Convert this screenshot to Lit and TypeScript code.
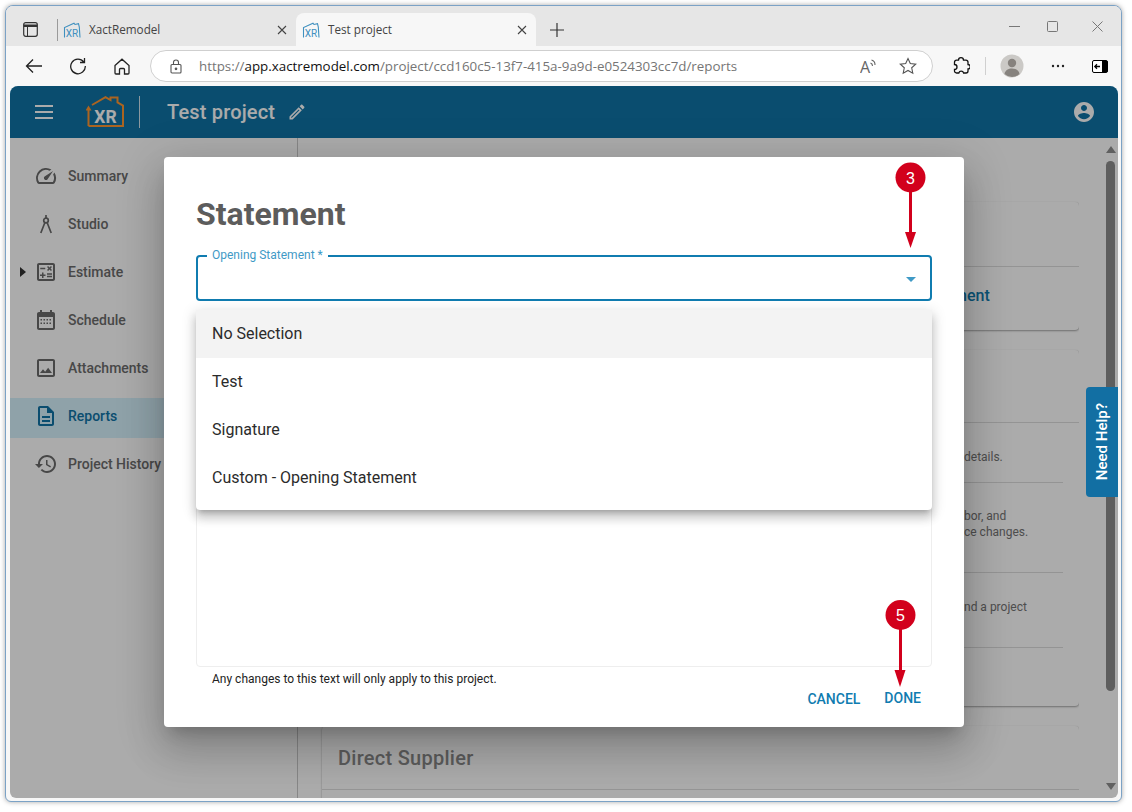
import { LitElement, html, css, svg } from "lit";
import { customElement } from "lit/decorators.js";

const P: Record<string, string> = {
  speed: "M20.38 8.57l-1.23 1.85a8 8 0 0 1-.22 7.58H5.07A8 8 0 0 1 15.58 6.85l1.85-1.23A10 10 0 0 0 3.35 19a2 2 0 0 0 1.72 1h13.85a2 2 0 0 0 1.74-1 10 10 0 0 0-.27-10.44zm-9.79 6.84a2 2 0 0 0 2.83 0l5.66-8.49-8.49 5.66a2 2 0 0 0 0 2.83z",
  calc: "M19 3H5c-1.1 0-2 .9-2 2v14c0 1.1.9 2 2 2h14c1.1 0 2-.9 2-2V5c0-1.1-.9-2-2-2zm0 16H5V5h14v14zM6.25 7.72h5v1.5h-5zM13 15.75h5v1.5h-5zM13 13.25h5v1.5h-5zM8 18h1.5v-2h2v-1.5h-2v-2H8v2H6V16h2zM14.09 10.95l1.41-1.41 1.41 1.41 1.06-1.06-1.41-1.42 1.41-1.41L16.91 6 15.5 7.41 14.09 6l-1.06 1.06 1.41 1.41-1.41 1.42z",
  cal: "M8 11H6.5v1.5H8zm3 0H9.5v1.5H11zm3 0h-1.5v1.5H14zm3 0h-1.5v1.5H17zM8 14.5H6.500v1.500H8zm3 0H9.500v1.500H11zm3 0h-1.500v1.500H14zm3 0h-1.500v1.500H17zM19 4h-1V2h-2v2H8V2H6v2H5c-1.110 0-1.990.9-1.990 2L3 20c0 1.100.89 2 2 2h14c1.100 0 2-.9 2-2V6c0-1.100-.9-2-2-2zm0 16H5V9h14z",
  image: "M19 5v14H5V5h14m0-2H5c-1.1 0-2 .9-2 2v14c0 1.1.9 2 2 2h14c1.1 0 2-.9 2-2V5c0-1.1-.9-2-2-2zm-4.86 8.86l-3 3.87L9 13.14 6 17h12l-3.86-5.14z",
  doc: "M8 16h8v2H8zm0-4h8v2H8zm6-10H6c-1.1 0-2 .9-2 2v16c0 1.1.89 2 1.99 2H18c1.1 0 2-.9 2-2V8l-6-6zm4 18H6V4h7v5h5v11z",
  history: "M13 3c-4.97 0-9 4.03-9 9H1l3.89 3.89.07.14L9 12H6c0-3.87 3.13-7 7-7s7 3.13 7 7-3.13 7-7 7c-1.93 0-3.68-.79-4.94-2.06l-1.42 1.42C8.27 19.99 10.51 21 13 21c4.97 0 9-4.03 9-9s-4.03-9-9-9zm-1 5v5l4.28 2.54.72-1.21-3.5-2.08V8H12z",
  edit: "M14.06 9.02l.92.92L5.92 19H5v-.92l9.06-9.06M17.66 3c-.25 0-.51.1-.7.29l-1.83 1.83 3.75 3.75 1.83-1.83c.39-.39.39-1.02 0-1.41l-2.34-2.34c-.2-.2-.45-.29-.71-.29zm-3.6 3.19L3 17.25V21h3.75L17.81 9.94l-3.75-3.75z",
  account: "M12 2C6.48 2 2 6.48 2 12s4.48 10 10 10 10-4.48 10-10S17.52 2 12 2zm0 3c1.66 0 3 1.34 3 3s-1.34 3-3 3-3-1.34-3-3 1.34-3 3-3zm0 14.2c-2.5 0-4.71-1.28-6-3.22.03-1.99 4-3.08 6-3.08 1.99 0 5.97 1.09 6 3.08-1.29 1.94-3.5 3.22-6 3.22z",
};

const icon = (k: string, cls = "") =>
  k === "studio"
    ? html`<svg class=${cls} width="24" height="24" viewBox="0 0 24 24" fill="none" stroke="currentColor" stroke-width="1.700"><circle cx="12" cy="8.500" r="2.300"></circle><path d="M12 3v3.200M10.800 10.800L6.800 21M13.200 10.800L17.200 21"></path></svg>`
    : html`<svg class=${cls} width="24" height="24" viewBox="0 0 24 24" fill="currentColor"><path d=${P[k]}></path></svg>`;

const favicon = html`<svg class="fav" width="18" height="18" viewBox="0 0 18 18" fill="none" stroke="#3f90bf" stroke-width="1.100">
  <path d="M1.500 16.500V6.500L11 2.200l1 1.300 3.500-.8.800 3.300.7 10.500"></path>
  <text x="9" y="15.500" text-anchor="middle" font-family="Roboto" font-size="10" font-weight="400" fill="#3f90bf" stroke="none">XR</text>
</svg>`;

const nav = [
  ["speed", "Summary"],
  ["studio", "Studio"],
  ["calc", "Estimate"],
  ["cal", "Schedule"],
  ["image", "Attachments"],
  ["doc", "Reports"],
  ["history", "Project History"],
];

@customElement("app-root")
export class AppRoot extends LitElement {
  static styles = css`
    :host { display: block; position: relative; width: 1132px; height: 812px; background: #fff; overflow: hidden; font-family: Roboto, sans-serif; }
    .window { position: absolute; left: 5px; top: 5px; width: 1117px; height: 797px; box-sizing: border-box; border: 1px solid #7ba2c6; border-radius: 8px 8px 6px 6px; background: #f7f7f7; box-shadow: 0 0 5px rgba(0,0,0,.35); display: flex; flex-direction: column; overflow: hidden; }
    .tabs { height: 40px; background: #e6e6e6; display: flex; align-items: flex-end; flex: none; font-family: "Open Sans", sans-serif; font-size: 11.700px; color: #444; }
    .tabside { width: 52px; height: 33px; flex: none; display: flex; align-items: center; box-sizing: border-box; padding-left: 17px; color: #333; }
    .tabside i { width: 1px; height: 22px; background: #9a9a9a; margin-left: 19px; flex: none; }
    .tab { width: 238px; height: 33px; flex: none; display: flex; align-items: center; box-sizing: border-box; padding: 0 9px 0 5px; }
    .tab.active { background: #f7f7f7; border-radius: 8px 8px 0 0; width: 240px; padding-left: 6px; }
    .tab .fav { margin-right: 8px; flex: none; }
    .tab .name { flex: 1; line-height: 16px; margin-top: -2px; }
    .plus { margin-left: 14px; height: 33px; display: flex; align-items: center; }
    .winbtns { margin-left: auto; height: 40px; display: flex; align-items: center; gap: 29px; padding-right: 18px; align-self: flex-start; }
    .winbtns .mx { margin-left: -2px; }
    .winbtns .cl { margin-left: 5px; }
    .toolbar { height: 40px; flex: none; display: flex; align-items: center; color: #333; position: relative; }
    .tool { width: 44px; display: flex; justify-content: center; flex: none; }
    .back { margin-left: 6px; }
    .url { margin-left: 6px; width: 783px; height: 32px; box-sizing: border-box; border: 1px solid #cfcfcf; border-radius: 16px; background: #fff; display: flex; align-items: center; padding: 0 15px 0 19px; flex: none; font-family: "Open Sans", sans-serif; font-size: 13.350px; color: #757575; }
    .url b { font-weight: 400; color: #111; }
    .url .addr { margin-left: 17px; flex: 1; white-space: nowrap; }
    .url .ra { margin-right: 21px; display: flex; }
    .right { display: flex; align-items: center; margin-left: 19px; }
    .sep { width: 1px; height: 18px; background: #d0d0d0; margin: 0 14px 0 15px; }
    .ava { margin-right: 27px; display: flex; }
    .dots { margin-right: 27px; display: flex; }
    .app { flex: 1; margin: 0 3px 3px 4px; position: relative; border-radius: 8px 8px 6px 6px; overflow: hidden; background: #fff; display: flex; flex-direction: column; min-height: 0; }
    .head { height: 52px; flex: none; background: #1073a6; color: #fff; display: flex; align-items: center; }
    .menu { margin-left: 25px; width: 18px; height: 14px; display: flex; flex-direction: column; justify-content: space-between; }
    .menu i { height: 2px; background: #fff; display: block; }
    .logo { margin-left: 33px; flex: none; }
    .hsep { width: 1px; height: 32px; background: rgba(255,255,255,.8); margin-left: 15px; }
    .title { margin-left: 27px; font-size: 20px; font-weight: 500; letter-spacing: .17px; }
    .pen { margin-left: 12px; width: 20px; height: 20px; display: flex; }
    .pen svg { width: 20px; height: 20px; }
    .acct { margin-left: auto; margin-right: 22px; display: flex; }
    .body { flex: 1; display: flex; min-height: 0; }
    .side { width: 287px; flex: none; border-right: 1px solid #c9c9c9; padding-top: 18px; background: #fff; display: flex; flex-direction: column; gap: 4px; }
    .nav { height: 44px; box-sizing: border-box; padding: 0 0 4px 10px; display: flex; align-items: center; color: #6c6c6c; font-size: 14px; font-weight: 500; white-space: nowrap; }
    .nav .car { width: 14px; flex: none; display: flex; }
    .nav svg.i { flex: none; color: #6a6a6a; }
    .nav .txt { margin-left: 10px; }
    .nav.on { background: linear-gradient(#d6f2fd, #d6f2fd) no-repeat 0 2px / 100% 40px; color: #1073a6; }
    .nav.on svg.i { color: #1073a6; }
    .main { flex: 1; min-width: 0; padding: 64px 0 0 24px; overflow: hidden; background: #fff; display: flex; flex-direction: column; gap: 20px; }
    .card { width: 757px; flex: none; box-sizing: border-box; border-radius: 4px; background: #fff; box-shadow: 0 1px 2px rgba(0,0,0,.35), 0 0 1px rgba(0,0,0,.1); }
    .c1 { height: 128px; }
    .c1 .top { height: 64px; border-bottom: 1px solid #ddd; }
    .c1 .link { margin: 19px 0 0 631px; color: #107cb0; font-size: 16px; font-weight: 500; line-height: 20px; }
    .c2 { height: 356px; }
    .c2 .top { height: 72px; border-bottom: 1px solid #ddd; }
    .row { margin-right: 16px; border-bottom: 1px solid #ddd; box-sizing: border-box; padding-left: 642px; font-size: 12px; line-height: 16px; color: #757575; white-space: nowrap; }
    .r1 { height: 60px; padding-top: 26px; }
    .r2 { height: 90px; padding-top: 25px; }
    .r3 { height: 75px; padding-top: 26px; }
    .c3 { height: 120px; }
    .c3 .top { height: 64px; border-bottom: 1px solid #ddd; box-sizing: border-box; padding: 19px 0 0 16px; font-size: 20px; line-height: 26px; font-weight: 500; letter-spacing: .27px; color: #8a8a8a; }
    .bar { width: 39px; flex: none; background: #fff; display: flex; flex-direction: column; align-items: center; box-sizing: border-box; padding: 8px 0 0 24px; }
    .up { width: 0; height: 0; border: 5px solid transparent; border-top: 0; border-bottom: 7px solid #8f8f8f; }
    .thumb { width: 9px; height: 530px; margin-top: 8px; border-radius: 5px; background: #8c8c8c; }
    .dn { width: 0; height: 0; border: 5px solid transparent; border-bottom: 0; border-top: 7px solid #8f8f8f; margin-top: 92px; }
    .scrim { position: absolute; inset: 0; background: rgba(0,0,0,.33); }
    .help { position: absolute; left: 1076px; top: 301px; width: 32px; height: 110px; background: #126fa3; border-radius: 4px 0 0 4px; color: #fff; font-size: 15px; font-weight: 500; display: flex; align-items: center; justify-content: center; }
    .help span { writing-mode: vertical-rl; transform: rotate(180deg); white-space: nowrap; }
    .modal { position: absolute; left: 154px; top: 71px; width: 800px; height: 570px; box-sizing: border-box; background: #fff; border-radius: 4px; padding: 38px 32px 0; box-shadow: 0 11px 15px -7px rgba(0,0,0,.2), 0 24px 38px 3px rgba(0,0,0,.14), 0 9px 46px 8px rgba(0,0,0,.12); }
    h2 { margin: 0; font-size: 32px; line-height: 38px; font-weight: 700; color: #5c5c5c; }
    .fieldwrap { position: relative; margin-top: 22px; }
    .field { height: 46px; box-sizing: border-box; border: 2px solid #107cb0; border-radius: 4px; position: relative; }
    .label { position: absolute; left: 9px; top: -9px; padding: 0 5px; background: #fff; font-size: 12px; line-height: 14px; color: #3f9ac6; white-space: nowrap; }
    .caret { position: absolute; right: 14px; top: 20px; width: 0; height: 0; border: 5px solid transparent; border-bottom: 0; border-top-color: #3f9ac6; }
    .drop { position: absolute; left: 0; top: 55px; width: 736px; background: #fff; border-radius: 0 0 4px 4px; padding-bottom: 8px; box-shadow: 0 5px 5px -3px rgba(0,0,0,.2), 0 8px 10px 1px rgba(0,0,0,.14), 0 3px 14px 2px rgba(0,0,0,.12); z-index: 1; }
    .opt { height: 48px; box-sizing: border-box; display: flex; align-items: center; padding: 0 0 2px 16px; font-size: 16px; color: #2b2b2b; }
    .opt.hl { background: #f3f3f3; }
    .area { margin-top: 16px; height: 350px; box-sizing: border-box; border: 1px solid #eee; border-radius: 4px; }
    .hint { margin: 5px 0 0 16px; font-size: 12px; line-height: 14px; color: #222; }
    .actions { display: flex; justify-content: flex-end; align-items: flex-start; gap: 24px; padding-right: 11px; margin-top: 4px; font-size: 14px; font-weight: 500; line-height: 16px; color: #107cb0; }
    .actions .c { margin-top: 1px; }
    .ann { position: absolute; left: 0; top: 0; pointer-events: none; }
  `;

  render() {
    const ann = (cx: number, cy: number, n: string) => svg`
      <circle cx=${cx} cy=${cy} r="15" fill="#d2001c"></circle>
      <text x=${cx} y=${cy + 6} text-anchor="middle" font-family="Liberation Sans" font-size="16" fill="#fff">${n}</text>`;
    return html`
      <div class="window">
        <div class="tabs">
          <div class="tabside">
            <svg width="15" height="15" viewBox="0 0 15 15" fill="none" stroke="#333" stroke-width="1.200"><rect x=".7" y=".7" width="13.600" height="13.600" rx="2"></rect><path d="M.7 3.800h13.600" stroke-width="2.400"></path><path d="M4.500 4.500v10" stroke-width="1"></path></svg>
            <i></i>
          </div>
          <div class="tab">
            ${favicon}<span class="name">XactRemodel</span>
            <svg width="10" height="10" viewBox="0 0 10 10" stroke="#444" stroke-width="1.100"><path d="M1 1l8 8M9 1l-8 8"></path></svg>
          </div>
          <div class="tab active">
            ${favicon}<span class="name">Test project</span>
            <svg width="10" height="10" viewBox="0 0 10 10" stroke="#444" stroke-width="1.100"><path d="M1 1l8 8M9 1l-8 8"></path></svg>
          </div>
          <div class="plus"><svg width="14" height="14" viewBox="0 0 14 14" stroke="#333" stroke-width="1.200"><path d="M7 0v14M0 7h14"></path></svg></div>
          <div class="winbtns">
            <svg width="11" height="11" viewBox="0 0 11 11" stroke="#777"><path d="M0 5.500h11"></path></svg>
            <svg class="mx" width="11" height="11" viewBox="0 0 11 11" fill="none" stroke="#777"><rect x=".5" y=".5" width="10" height="10" rx="1"></rect></svg>
            <svg class="cl" width="11" height="11" viewBox="0 0 11 11" stroke="#777"><path d="M.5 .5l10 10M10.500 .5l-10 10"></path></svg>
          </div>
        </div>
        <div class="toolbar">
          <div class="tool back"><svg width="18" height="16" viewBox="0 0 18 16" fill="none" stroke="#222" stroke-width="1.300"><path d="M17 8H1.500M8 1.500L1.500 8 8 14.500"></path></svg></div>
          <div class="tool"><svg width="18" height="18" viewBox="0 0 18 18" fill="none" stroke="#222" stroke-width="1.300"><path d="M14.800 5A7.300 7.300 0 1 0 16.300 9M15.500 1v4.500H11"></path></svg></div>
          <div class="tool"><svg width="16" height="17" viewBox="0 0 16 17" fill="none" stroke="#222" stroke-width="1.300"><path d="M1 7.500L8 1.200l7 6.300V15a1 1 0 0 1-1 1h-3.500v-4.500a1 1 0 0 0-1-1h-3a1 1 0 0 0-1 1V16H2a1 1 0 0 1-1-1z"></path></svg></div>
          <div class="url">
            <svg width="12" height="15" viewBox="0 0 12 15" fill="none" stroke="#555" stroke-width="1.100"><rect x="1" y="5.500" width="10" height="8.500" rx="1"></rect><path d="M3.500 5.500V3.500a2.500 2.500 0 0 1 5 0v2"></path><circle cx="6" cy="9.800" r=".8" fill="#555"></circle></svg>
            <span class="addr">https://<b>app.xactremodel.com</b>/project/ccd160c5-13f7-415a-9a9d-e0524303cc7d/reports</span>
            <span class="ra"><svg width="18" height="22" viewBox="0 0 18 22" fill="none" stroke="#666" stroke-width="1.100"><text x="0" y="18" font-family="Open Sans" font-size="16" fill="#666" stroke="none">A</text><path d="M11.500 5a5 5 0 0 1 3.500 5M10.500 8a3 3 0 0 1 2 3"></path></svg></span>
            <svg width="18" height="18" viewBox="0 0 18 18" fill="none" stroke="#555" stroke-width="1.100"><path d="M9 1.500l2.300 5 5.400.6-4 3.700 1.100 5.400L9 13.500 4.200 16.200l1.100-5.400-4-3.700 5.400-.6z"></path></svg>
          </div>
          <div class="right">
            <svg width="18" height="18" viewBox="0 0 18 18" fill="none" stroke="#111" stroke-width="1.300"><path d="M6.500 3.200a2.500 2.500 0 0 1 5 0h2.500a2 2 0 0 1 2 2v2.300a2.200 2.200 0 0 1 0 4.400V14a2 2 0 0 1-2 2h-2.400a2.500 2.500 0 0 0-4.800 0H4.500a2 2 0 0 1-2-2v-1.500a2.500 2.500 0 0 0 0-5V5.200a2 2 0 0 1 2-2z"></path></svg>
            <i class="sep"></i>
            <span class="ava"><svg width="24" height="24" viewBox="0 0 24 24"><circle cx="12" cy="12" r="11.500" fill="#cbc9c6"></circle><circle cx="12" cy="9" r="4.200" fill="#86827e"></circle><path d="M4.500 20c.8-4 3.800-5.500 7.500-5.500s6.700 1.500 7.500 5.500a11 11 0 0 1-15 0z" fill="#86827e"></path></svg></span>
            <span class="dots"><svg width="14" height="4" viewBox="0 0 14 4" fill="#222"><circle cx="2" cy="2" r="1.200"></circle><circle cx="7" cy="2" r="1.200"></circle><circle cx="12" cy="2" r="1.200"></circle></svg></span>
            <svg width="16" height="13" viewBox="0 0 16 13"><rect x=".5" y=".5" width="15" height="12" rx="1.500" fill="#fff" stroke="#000"></rect><rect x="10" y="1" width="5.500" height="11" fill="#000"></rect><path d="M8 6.500H3M5 4.300L2.800 6.500 5 8.700" fill="none" stroke="#000" stroke-width="1.300"></path></svg>
          </div>
        </div>
        <div class="app">
          <div class="head">
            <div class="menu"><i></i><i></i><i></i></div>
            <svg class="logo" width="38" height="32" viewBox="0 0 38 32" fill="none" stroke="#ff9530" stroke-width="2">
              <path d="M2.500 30H37V9.500L31.500 6.500V1.500H24.500V4L19.500 1.200 6 9"></path>
              <path d="M2.500 30V13"></path>
              <path d="M-.5 14.500L2.500 9.500 5.500 14.500z" fill="#ff9530" stroke="none"></path>
              <text x="19.500" y="27" text-anchor="middle" font-family="Roboto" font-size="17.500" font-weight="700" fill="#fff" stroke="none">XR</text>
            </svg>
            <i class="hsep"></i>
            <span class="title">Test project</span>
            <span class="pen">${icon("edit")}</span>
            <span class="acct">${icon("account")}</span>
          </div>
          <div class="body">
            <div class="side">
              ${nav.map(([k, t]) => html`
                <div class="nav ${t === "Reports" ? "on" : ""}">
                  <span class="car">${t === "Estimate" ? html`<svg width="6" height="10" viewBox="0 0 6 10" fill="#333"><path d="M0 0l6 5-6 5z"></path></svg>` : ""}</span>
                  ${icon(k, "i")}<span class="txt">${t}</span>
                </div>`)}
            </div>
            <div class="main">
              <div class="card c1"><div class="top"></div><div class="link">ment</div></div>
              <div class="card c2">
                <div class="top"></div>
                <div class="row r1">details.</div>
                <div class="row r2">bor, and<br />ce changes.</div>
                <div class="row r3">nd a project</div>
              </div>
              <div class="card c3"><div class="top">Direct Supplier</div></div>
            </div>
            <div class="bar">
              <i class="up"></i><i class="thumb"></i><i class="dn"></i>
            </div>
          </div>
          <div class="scrim"></div>
          <div class="help"><span>Need Help?</span></div>
          <div class="modal">
            <h2>Statement</h2>
            <div class="fieldwrap">
              <div class="field">
                <span class="label">Opening Statement *</span>
                <i class="caret"></i>
              </div>
              <div class="drop">
                <div class="opt hl">No Selection</div>
                <div class="opt">Test</div>
                <div class="opt">Signature</div>
                <div class="opt">Custom - Opening Statement</div>
              </div>
            </div>
            <div class="area"></div>
            <div class="hint">Any changes to this text will only apply to this project.</div>
            <div class="actions"><span class="c">CANCEL</span><span>DONE</span></div>
          </div>
        </div>
      </div>
      <svg class="ann" width="1132" height="812" viewBox="0 0 1132 812">
        <g fill="#d2001c" stroke="none">
          <rect x="909" y="190" width="3" height="44"></rect><path d="M905 232h11l-5.500 16z"></path>
          <rect x="515" y="422.500" width="46" height="3"></rect><path d="M517 418v12l-17-6z"></path>
          <rect x="899" y="628" width="3" height="44"></rect><path d="M894.500 670h11l-5.500 17z"></path>
        </g>
        ${ann(910.5, 177.5, "3")}
        ${ann(573.5, 424, "4")}
        ${ann(900.5, 615, "5")}
      </svg>
    `;
  }
}
